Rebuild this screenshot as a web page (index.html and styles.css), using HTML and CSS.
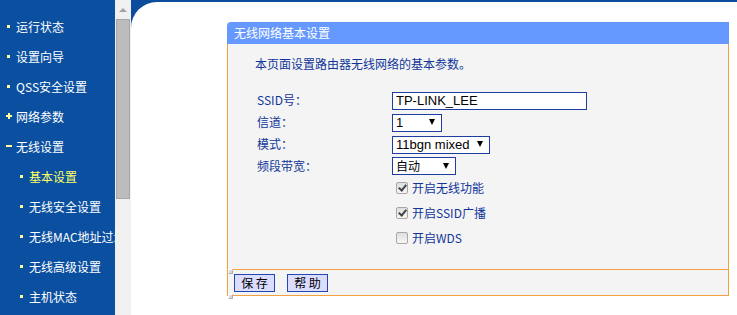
FILE: index.html
```html
<!DOCTYPE html>
<html lang="zh-CN">
<head>
<meta charset="UTF-8">
<title>无线网络基本设置</title>
<link rel="stylesheet" href="styles.css">
</head>
<body>

<div class="nav">
  <ul class="menu">
    <li class="item"><span class="bullet"><i class="dot"></i></span>运行状态</li>
    <li class="item"><span class="bullet"><i class="dot"></i></span>设置向导</li>
    <li class="item"><span class="bullet"><i class="dot"></i></span>QSS安全设置</li>
    <li class="item"><span class="bullet"><i class="plus"></i></span>网络参数</li>
    <li class="item"><span class="bullet"><i class="minus"></i></span>无线设置</li>
    <li class="item sub active"><span class="bullet"><i class="dot"></i></span>基本设置</li>
    <li class="item sub"><span class="bullet"><i class="dot"></i></span>无线安全设置</li>
    <li class="item sub"><span class="bullet"><i class="dot"></i></span>无线MAC地址过滤</li>
    <li class="item sub"><span class="bullet"><i class="dot"></i></span>无线高级设置</li>
    <li class="item sub"><span class="bullet"><i class="dot"></i></span>主机状态</li>
  </ul>
</div>

<div class="scrollbar">
  <div class="arrow-box"><i class="arrow-up"></i></div>
  <div class="thumb"></div>
</div>

<div class="main">
  <div class="page">
    <div class="panel">
      <div class="panel-head">无线网络基本设置</div>
      <div class="panel-body">
        <p class="desc">本页面设置路由器无线网络的基本参数。</p>
        <div class="form">
          <label class="lbl">SSID号：</label>
          <div><input class="text-input" type="text" value="TP-LINK_LEE"></div>

          <label class="lbl">信道：</label>
          <div><span class="sel w-channel"><select><option>1</option></select></span></div>

          <label class="lbl">模式：</label>
          <div><span class="sel w-mode"><select><option>11bgn mixed</option></select></span></div>

          <label class="lbl">频段带宽：</label>
          <div><span class="sel w-band"><select class="cjk"><option>自动</option></select></span></div>
        </div>
        <div class="checks">
          <label class="check"><input type="checkbox" checked>开启无线功能</label>
          <label class="check"><input type="checkbox" checked>开启SSID广播</label>
          <label class="check"><input type="checkbox">开启WDS</label>
        </div>
      </div>
      <div class="panel-foot">
        <button class="btn">保 存</button>
        <button class="btn">帮 助</button>
      </div>
    </div>
  </div>
</div>

</body>
</html>
```

FILE: styles.css
```css
body {
  margin: 0;
  display: flex;
  height: 315px;
  overflow: hidden;
  font-family: "Noto Sans CJK SC", "DejaVu Sans", sans-serif;
  font-size: 12px;
  background: #fff;
}

/* left menu */
.nav {
  width: 115px;
  background: #0b50a0;
  overflow: hidden;
}
.menu {
  list-style: none;
  margin: 0;
  padding: 11px 0 0 0;
}
.item {
  height: 30px;
  display: flex;
  align-items: center;
  padding-left: 6px;
  color: #fff;
  white-space: nowrap;
}
.item.sub {
  padding-left: 19px;
}
.item.active {
  color: #ffff66;
}
.bullet {
  width: 10px;
  height: 10px;
  display: flex;
  align-items: center;
  flex: none;
}
.dot {
  width: 3px;
  height: 3px;
  margin-left: 1px;
  background: #ffff99;
}
.plus, .minus {
  position: relative;
  width: 6px;
  height: 2px;
  background: #ffff99;
}
.plus::after {
  content: "";
  position: absolute;
  left: 2px;
  top: -2px;
  width: 2px;
  height: 6px;
  background: #ffff99;
}

/* fake scrollbar */
.scrollbar {
  width: 16px;
  background: #f0f0f0;
}
.arrow-box {
  height: 19px;
  display: flex;
  justify-content: center;
  align-items: center;
}
.arrow-up {
  width: 0;
  height: 0;
  border-left: 4px solid transparent;
  border-right: 4px solid transparent;
  border-bottom: 4px solid #a3a3a3;
}
.thumb {
  margin-left: 1px;
  width: 12px;
  height: 178px;
  background: #bcbcbc;
  border: 1px solid #a6a6a6;
}

/* content area */
.main {
  flex: 1;
  background: #0b4d9c;
}
.page {
  margin-top: 2px;
  height: 313px;
  background: #fff;
  border-top-left-radius: 26px;
  padding: 20px 0 0 96px;
  box-sizing: border-box;
}
.panel {
  width: 502px;
}
.panel-head {
  height: 22px;
  line-height: 22px;
  padding-left: 7px;
  background: #6699ff;
  color: #fff;
  border-top-left-radius: 4px;
}
.panel-body {
  height: 225px;
  box-sizing: border-box;
  background: #f4f4f4;
  border-left: 1px solid #f5a040;
  border-right: 1px solid #f5a040;
  padding: 12px 0 0 27px;
  color: #10369a;
}
.desc {
  margin: 0;
  line-height: 16px;
}
.form {
  margin: 19px 0 0 2px;
  display: grid;
  grid-template-columns: 135px auto;
  grid-auto-rows: 18px;
  row-gap: 4px;
}
.lbl {
  line-height: 18px;
}
.text-input {
  width: 195px;
  height: 18px;
  box-sizing: border-box;
  border: 1px solid #1c3e9e;
  padding: 0 0 0 3px;
  margin: 0;
  font-family: "Liberation Sans", Arial, sans-serif;
  font-size: 13px;
  color: #000;
  background: #fff;
  outline: none;
}
.sel {
  position: relative;
  display: inline-block;
  vertical-align: top;
}
.sel select {
  appearance: none;
  width: 100%;
  height: 18px;
  box-sizing: border-box;
  border: 1px solid #1c3e9e;
  border-radius: 0;
  padding: 0 0 0 3px;
  margin: 0;
  background: #fff;
  color: #000;
  font-family: "Liberation Sans", Arial, sans-serif;
  font-size: 13px;
  line-height: 16px;
}
.sel select.cjk {
  font-family: "Noto Sans CJK SC", sans-serif;
  font-size: 12px;
}
.sel::after {
  content: "";
  position: absolute;
  right: 7px;
  top: 6px;
  border-left: 3px solid transparent;
  border-right: 3px solid transparent;
  border-top: 6px solid #000;
  pointer-events: none;
}
.w-channel { width: 50px; }
.w-mode { width: 98px; }
.w-band { width: 64px; }

.checks {
  margin-left: 141px;
}
.check {
  height: 25px;
  display: flex;
  align-items: center;
}
.check input {
  appearance: none;
  position: relative;
  width: 12px;
  height: 12px;
  margin: 0 4px 0 0;
  border: 1px solid #a8a8a8;
  border-radius: 2px;
  background: linear-gradient(#dedede, #f6f6f6);
}
.check input:checked::after {
  content: "";
  position: absolute;
  left: 3px;
  top: 0;
  width: 3px;
  height: 6px;
  border-right: 2px solid #444;
  border-bottom: 2px solid #444;
  transform: rotate(40deg);
}

.panel-foot {
  position: relative;
  height: 25px;
  border: 1px solid #f5a040;
  background: #f4f4f4;
  padding-left: 6px;
  display: flex;
  align-items: center;
  gap: 12px;
}
/* little spacer-image marks on the corners */
.panel-foot::before,
.panel-foot::after {
  content: "";
  position: absolute;
  left: 0;
  width: 3px;
  height: 3px;
  background: #d8d8d8;
  border: 1px solid #b0b0b0;
  border-top-color: #fff;
  border-left-color: #fff;
}
.panel-foot::before { top: -1px; }
.panel-foot::after { bottom: -4px; }
.btn {
  width: 41px;
  height: 18px;
  margin: 0;
  padding: 0;
  border: 1px solid #2048b0;
  background: #dcdcff;
  color: #000;
  font-family: "Noto Sans CJK SC", sans-serif;
  font-size: 12px;
  line-height: 16px;
}
```
